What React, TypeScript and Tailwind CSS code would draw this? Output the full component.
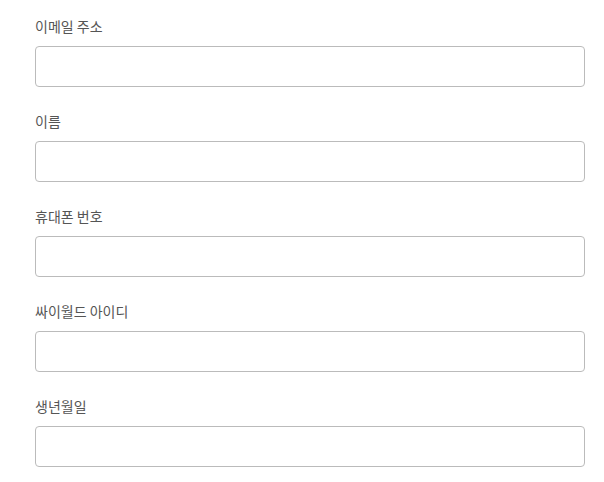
import React from "react";

const fields = ["이메일 주소", "이름", "휴대폰 번호", "싸이월드 아이디", "생년월일"];

export default function App() {
  return (
    <div
      className="min-h-[482px] w-[604px] bg-white pt-[16px] pl-[35px]"
      style={{ fontFamily: '"Noto Sans CJK KR", "Noto Sans", sans-serif' }}
    >
      <div className="flex w-[550px] flex-col gap-[24px]">
        {fields.map((f) => (
          <div key={f} className="flex flex-col gap-[10px]">
            <label className="h-[20px] text-[14px] leading-[20px] text-[#555555]">{f}</label>
            <input
              type="text"
              className="h-[41px] w-full rounded-[4px] border border-[#bbbbbb] bg-white px-3 outline-none"
            />
          </div>
        ))}
      </div>
    </div>
  );
}
